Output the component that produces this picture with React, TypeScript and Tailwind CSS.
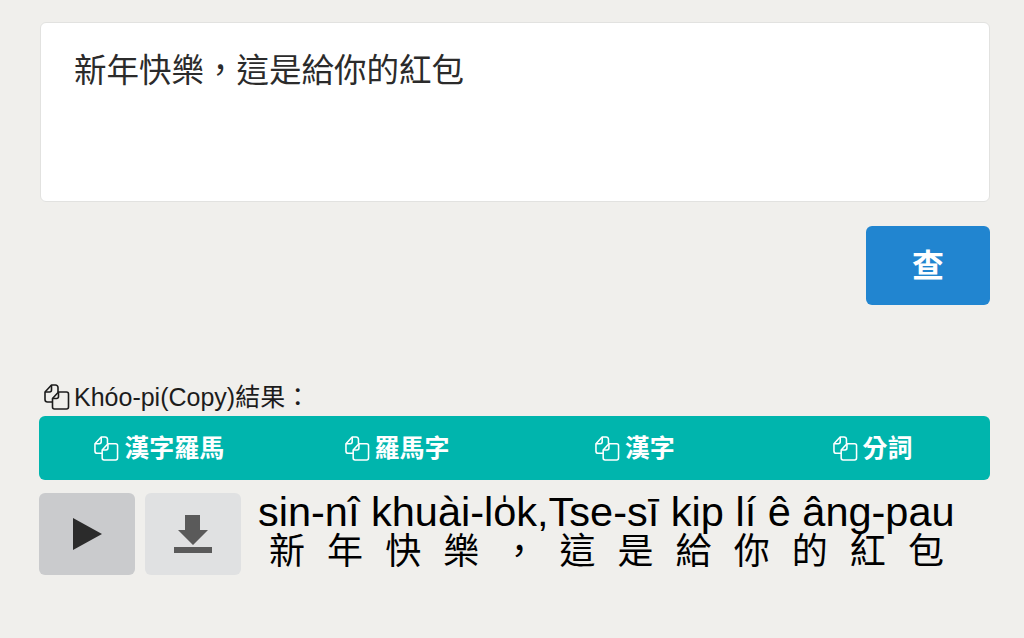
import type { ReactNode } from "react";

const CJK = "font-['Liberation_Sans','Noto_Sans_CJK_TC',sans-serif]";

function CopyIcon({ className }: { className?: string }) {
  return (
    <svg viewBox="0 0 26 26" fill="none" stroke="currentColor" strokeWidth="1.600" strokeLinejoin="round" className={className}>
      <path d="M8.500 18H3.500A2.500 2.500 0 0 1 1 15.500V8L7.500 1H11.500A2.500 2.500 0 0 1 14 3.500V8" />
      <path d="M1 8H5.500A2 2 0 0 0 7.500 6V1" />
      <path d="M8.500 14.500L14.500 8H22.500A2 2 0 0 1 24.500 10V23A2 2 0 0 1 22.500 25H10.500A2 2 0 0 1 8.500 23Z" />
      <path d="M8.500 14.500H12.500A2 2 0 0 0 14.500 12.500V8" />
    </svg>
  );
}

function CopyTab({ children }: { children: ReactNode }) {
  return (
    <button className="flex items-center justify-center gap-[5px] pl-[3px] text-[25px] font-bold leading-none text-white">
      <CopyIcon className="h-[25px] w-[25px]" />
      <span>{children}</span>
    </button>
  );
}

const hanji = ["新", "年", "快", "樂", "，", "這", "是", "給", "你", "的", "紅", "包"];

export default function App() {
  return (
    <div className={`${CJK} min-h-[638px] bg-[#f0efec] pl-[40px] pr-[34px] pt-[22px] text-black`}>
      <div className="h-[180px] rounded-[6px] border border-[#e2e2e0] bg-white px-[33px] pt-[27px] text-[32.500px] leading-[42px] text-[#2b2b2b]">
        新年快樂，這是給你的紅包
      </div>

      <div className="mt-[24px] flex justify-end">
        <button className="flex h-[79px] w-[124px] items-center justify-center rounded-[6px] bg-[#2185d0] text-[32px] font-bold text-white">
          查
        </button>
      </div>

      <div className="mt-[76px] flex h-[32px] items-center gap-[4px] pl-[4px] text-[25px] leading-none text-[#1c1c1c]">
        <CopyIcon className="h-[26px] w-[26px]" />
        <span>Khóo-pi(Copy)結果：</span>
      </div>

      <div className="-ml-px mt-[3px] grid h-[64px] grid-cols-4 rounded-[6px] bg-[#00b5ad]">
        <CopyTab>漢字羅馬</CopyTab>
        <CopyTab>羅馬字</CopyTab>
        <CopyTab>漢字</CopyTab>
        <CopyTab>分詞</CopyTab>
      </div>

      <div className="-ml-px mt-[13px] flex">
        <button className="flex h-[82px] w-[96px] items-center justify-center rounded-[6px] bg-[#cacbcd] text-[#2b2b2b]">
          <svg viewBox="0 0 29 32" className="h-[32px] w-[29px]" fill="currentColor">
            <path d="M0 0L29 16L0 32Z" />
          </svg>
        </button>
        <button className="ml-[10px] flex h-[82px] w-[96px] items-center justify-center rounded-[6px] bg-[#e0e1e2] text-[#5a5a5a]">
          <svg viewBox="0 0 38 38" className="h-[38px] w-[38px]" fill="currentColor">
            <path d="M11 0H26V15H34L19 30L4 15H11Z" />
            <rect x="0" y="32" width="38" height="6" />
          </svg>
        </button>

        <div className="ml-[17px] w-[697px]">
          <div className="whitespace-nowrap text-[41.500px] leading-[38px]">
            sin-nî khuài-lo̍k,Tse-sī kip lí ê âng-pau
          </div>
          <div className="mt-[2px] grid grid-cols-12 text-[36px] leading-[38px]">
            {hanji.map((ch, i) => (
              <span key={i} className="text-center">{ch}</span>
            ))}
          </div>
        </div>
      </div>
    </div>
  );
}
